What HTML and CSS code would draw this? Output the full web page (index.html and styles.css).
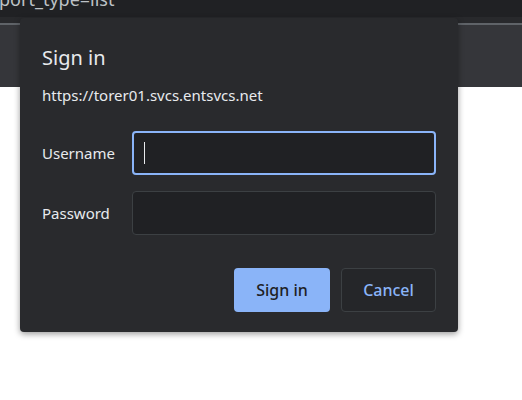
FILE: index.html
```html
<!DOCTYPE html>
<html lang="en">
<head>
  <meta charset="UTF-8" />
  <title>Sign in</title>
  <link rel="stylesheet" href="styles.css">
</head>
<body>
  <div class="browser">
    <div class="address">
      <span class="address-text">port_type=list</span>
    </div>
    <div class="strip"></div>
    <div class="toolbar"></div>
  </div>

  <div class="dialog">
    <h2>Sign in</h2>
    <p class="origin">https://torer01.svcs.entsvcs.net</p>

    <div class="field first">
      <label for="user">Username</label>
      <div class="input focused" id="user"><span class="caret"></span></div>
    </div>
    <div class="field">
      <label for="pass">Password</label>
      <div class="input" id="pass"></div>
    </div>

    <div class="actions">
      <button class="primary">Sign in</button>
      <button class="secondary">Cancel</button>
    </div>
  </div>
</body>
</html>
```

FILE: styles.css
```css
* {
  margin: 0;
  padding: 0;
  box-sizing: border-box;
  font-family: "Noto Sans", "Open Sans", sans-serif;
}

body {
  background: #ffffff;
  width: 522px;
  height: 400px;
  overflow: hidden;
  position: relative;
}

.address {
  background: #202124;
  height: 17px;
  overflow: hidden;
}

.address-text {
  display: block;
  margin-top: -12px;
  margin-left: -1px;
  color: #bdc1c6;
  font-size: 18px;
  line-height: 22px;
  white-space: nowrap;
}

.strip {
  height: 8px;
  background: #28292c;
  border-bottom: 2px solid #5f6368;
}

.toolbar {
  height: 62px;
  background: #35363a;
}

/* the sign-in popup sits over the browser chrome */
.dialog {
  position: absolute;
  left: 20px;
  top: 18px;
  width: 438px;
  height: 314px;
  background: #292a2d;
  border-radius: 4px;
  box-shadow: 0 2px 6px rgba(0, 0, 0, 0.4);
  padding: 24px 22px 20px 22px;
  display: flex;
  flex-direction: column;
  color: #e8eaed;
}

.dialog h2 {
  font-size: 20px;
  font-weight: normal;
  line-height: 32px;
}

.origin {
  font-size: 15px;
  line-height: 20px;
  margin-top: 11px;
}

.field {
  display: flex;
  align-items: center;
  margin-top: 16px;
}

.field.first {
  margin-top: 26px;
}

.field label {
  width: 90px;
  font-size: 15px;
}

.input {
  flex: 1;
  height: 44px;
  background: #202124;
  border: 1px solid #3c4043;
  border-radius: 4px;
  display: flex;
  align-items: center;
  padding-left: 11px;
}

.input.focused {
  border: 2px solid #8ab4f8;
  padding-left: 10px;
}

.caret {
  width: 1px;
  height: 22px;
  background: #e8eaed;
}

.actions {
  margin-top: auto;
  display: flex;
  justify-content: flex-end;
  gap: 11px;
}

.actions button {
  height: 44px;
  border-radius: 4px;
  font-size: 16px;
  font-weight: 500;
}

.primary {
  width: 96px;
  background: #8ab4f8;
  color: #202124;
  border: none;
}

.secondary {
  width: 95px;
  background: #252629;
  color: #8ab4f8;
  border: 1px solid #3c4043;
}
```
